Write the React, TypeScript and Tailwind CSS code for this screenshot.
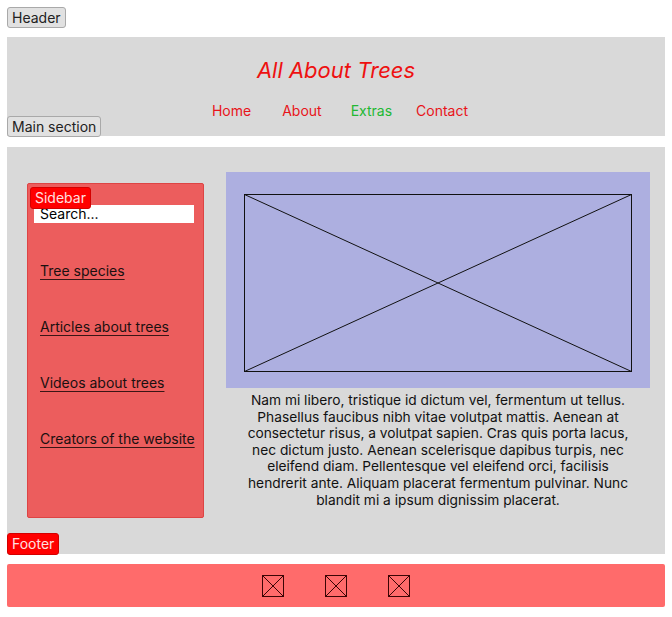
function Badge({ label, className }: { label: string; className?: string }) {
  return (
    <span
      className={
        "block h-[21px] w-fit rounded-[3px] border border-[#a9a9a9] bg-[#e1e1e1] px-[4px] text-[14px] leading-[19px] text-[#222] " +
        (className ?? "")
      }
    >
      {label}
    </span>
  );
}

function RedBadge({ label, className }: { label: string; className?: string }) {
  return (
    <span
      className={
        "block h-[22px] w-fit rounded-[3px] border border-[#d40000] bg-[#ff0000] px-[4px] text-[14px] leading-[20px] text-[#ffe0e0] " +
        (className ?? "")
      }
    >
      {label}
    </span>
  );
}

function XBox() {
  return (
    <svg width="22" height="22" viewBox="0 0 22 22" className="block">
      <rect x="0.5" y="0.5" width="21" height="21" fill="none" stroke="#3b0505" />
      <line x1="0.5" y1="0.5" x2="21.5" y2="21.5" stroke="#3b0505" />
      <line x1="21.5" y1="0.5" x2="0.5" y2="21.5" stroke="#3b0505" />
    </svg>
  );
}

const links = ["Tree species", "Articles about trees", "Videos about trees", "Creators of the website"];

export default function App() {
  return (
    <div className="flex min-h-screen flex-col bg-white px-[7px] pt-[7px] font-[Inter,sans-serif]">
      <Badge label="Header" />

      <header className="relative mt-[9px] flex h-[99px] flex-col items-center bg-[#d9d9d9] pt-[20px]">
        <h1 className="text-[22px] italic leading-[27px] text-[#ee1111]">All About Trees</h1>
        <nav className="ml-[8px] mt-[18px] flex text-[14px] leading-[17px]">
          <a className="text-[#e8141a]">Home</a>
          <a className="ml-[31px] text-[#e8141a]">About</a>
          <a className="ml-[29px] text-[#22b833]">Extras</a>
          <a className="ml-[24px] text-[#e8141a]">Contact</a>
        </nav>
        <Badge label="Main section" className="absolute left-0 top-[79px]" />
      </header>

      <main className="relative mt-[11px] flex h-[407px] bg-[#d9d9d9] pl-[20px] pr-[15px] pt-[25px]">
        <aside className="relative mt-[11px] h-[335px] w-[177px] shrink-0 rounded-[2px] border border-[#d44] bg-[#ec5d5d] pl-[6px] pr-[9px] pt-[21px]">
          <RedBadge label="Sidebar" className="absolute left-[2px] top-[3px]" />
          <input
            readOnly
            value="Search..."
            className="block h-[18px] w-full bg-white pl-[6px] text-[14px] leading-[18px] text-black outline-none"
          />
          <ul className="mt-[39px] flex flex-col gap-[38px] pl-[6px] text-[14px] leading-[18px] text-[#1a1010]">
            {links.map((l) => (
              <li key={l} className="whitespace-nowrap">
                <a className="underline decoration-[#3a1515] underline-offset-[3px]">{l}</a>
              </li>
            ))}
          </ul>
        </aside>

        <section className="ml-[22px] flex flex-1 flex-col">
          <div className="flex h-[216px] bg-[#adafe0] pb-[16px] pl-[18px] pr-[18px] pt-[22px]">
            <svg className="h-full w-full" viewBox="0 0 388 178" preserveAspectRatio="none">
              <rect x="0.5" y="0.5" width="387" height="177" fill="none" stroke="#111" />
              <line x1="0.5" y1="0.5" x2="387.5" y2="177.5" stroke="#111" />
              <line x1="387.5" y1="0.5" x2="0.5" y2="177.5" stroke="#111" />
            </svg>
          </div>
          <p className="mt-[4px] px-[20px] text-center text-[13.75px] leading-[16.6px] text-[#111]">
            Nam mi libero, tristique id dictum vel, fermentum ut tellus. Phasellus faucibus nibh vitae volutpat
            mattis. Aenean at consectetur risus, a volutpat sapien. Cras quis porta lacus, nec dictum justo. Aenean
            scelerisque dapibus turpis, nec eleifend diam. Pellentesque vel eleifend orci, facilisis hendrerit ante.
            Aliquam placerat fermentum pulvinar. Nunc blandit mi a ipsum dignissim placerat.
          </p>
        </section>

        <RedBadge label="Footer" className="absolute left-0 top-[386px]" />
      </main>

      <footer className="mt-[10px] flex h-[43px] items-center justify-center gap-[41px] rounded-[2px] bg-[#ff6b6b]">
        <XBox />
        <XBox />
        <XBox />
      </footer>
    </div>
  );
}
